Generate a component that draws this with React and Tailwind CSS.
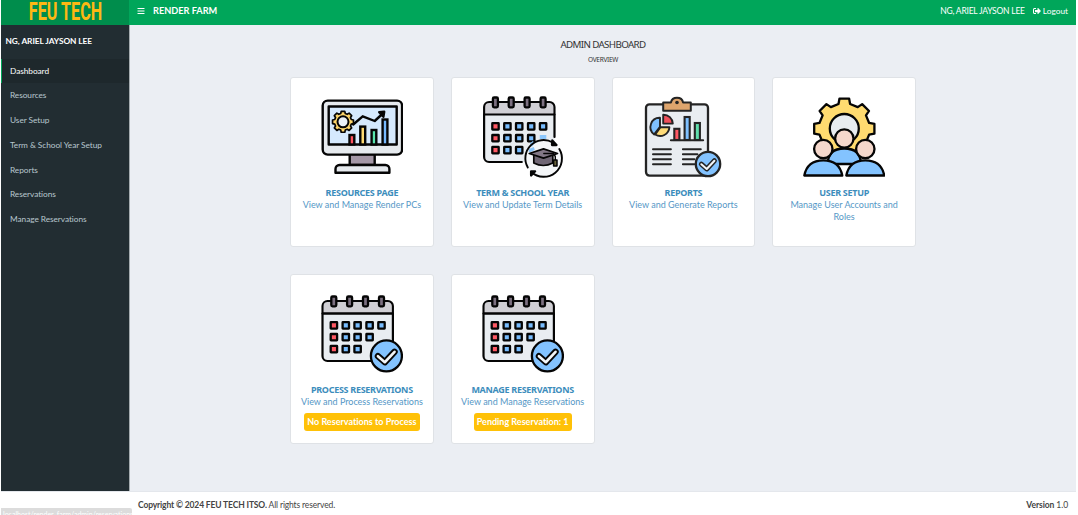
import React from "react";
import { FaBars, FaSignOutAlt } from "react-icons/fa";

const INK = "#050505";

function gearPath(cx, cy, outer, inner, teeth, tipHalf, rootHalf) {
  const points = [];
  for (let i = 0; i < teeth; i++) {
    const a = (i * 2 * Math.PI) / teeth - Math.PI / 2;
    [
      [inner, -rootHalf],
      [outer, -tipHalf],
      [outer, tipHalf],
      [inner, rootHalf],
    ].forEach(([r, d]) => {
      points.push(`${(cx + r * Math.cos(a + d)).toFixed(2)} ${(cy + r * Math.sin(a + d)).toFixed(2)}`);
    });
  }
  return `M${points.join("L")}Z`;
}

function MonitorIcon() {
  return (
    <svg className="size-[82px]" viewBox="11.3 11 82 82" fill="none" stroke={INK} strokeWidth="2.4" strokeLinejoin="round" strokeLinecap="round">
      <rect x="40" y="69" width="25" height="11" fill="#a497a6" />
      <path d="M25.8 87.8V84a4 4 0 0 1 4-4h45.9a4 4 0 0 1 4 4v3.8z" fill="#e6eaee" />
      <rect x="13" y="15.6" width="79.4" height="54" rx="5" fill="#e6eaee" />
      <rect x="19" y="21.5" width="68" height="38" fill="#d5e9fd" />
      <path d="M43.5 39.5 53 31.3l12 4.7 7.6-7" />
      <path d="m69.5 27.2 5-.5-.8 5z" fill={INK} />
      <path d={gearPath(33.3, 36.8, 10.6, 8.6, 8, 0.17, 0.27)} fill="#ffd76b" strokeWidth="1.7" />
      <circle cx="33.3" cy="36.8" r="5.5" fill="#eaf1f7" strokeWidth="2" />
      <g strokeLinejoin="miter">
        <rect x="39.8" y="50" width="4.8" height="9.5" fill="#ff5360" />
        <rect x="50.6" y="41.6" width="4.9" height="17.9" fill="#ffda71" />
        <rect x="61.9" y="45" width="4.7" height="14.5" fill="#58e5ad" />
        <rect x="72.9" y="34.5" width="4.8" height="25" fill="#77baff" />
      </g>
    </svg>
  );
}

const CELL_X = [25.7, 37.6, 49.4, 61.4, 73.3];
const CELL_Y = [41.4, 53.2, 65.1];

function CalendarBase({ counts, outline }) {
  return (
    <>
      <path d="M14.3 29.5V22a5 5 0 0 1 5-5h60.4a5 5 0 0 1 5 5v50a5 5 0 0 1-5 5H19.3a5 5 0 0 1-5-5z" fill="#e9edf1" stroke="none" />
      <path d="M14.3 29.5V22a5 5 0 0 1 5-5h60.4a5 5 0 0 1 5 5v7.5z" fill="#d0cfd4" strokeWidth="2.1" />
      <path d={outline} strokeWidth="2.2" />
      {[25.6, 41.4, 57.3, 73.3].map((x) => (
        <rect key={x} x={x - 2.5} y="12.5" width="5" height="9.8" rx="1.2" fill="#7c7080" />
      ))}
      {CELL_Y.map((y, row) =>
        CELL_X.slice(0, counts[row]).map((x, col) => (
          <rect key={`${x}-${y}`} x={x - 3.2} y={y - 3.2} width="6.4" height="6.4" rx=".3" fill={col === 0 ? "#ff5964" : "#78bdff"} strokeWidth="2.3" />
        ))
      )}
    </>
  );
}

function TermIcon() {
  return (
    <svg className="size-[82px]" viewBox="12.2 11 82 82" fill="none" stroke={INK} strokeWidth="2.3" strokeLinejoin="round" strokeLinecap="round">
      <CalendarBase counts={[5, 4, 3]} outline="M84.7 29.5V52M52 77H19.3a5 5 0 0 1-5-5V29.5" />
      <circle cx="73.7" cy="73.3" r="18" fill="#f4f6f8" stroke="none" />
      <path d="M60 58.500l3-2.500 2 2-3 4zM70 50h6.500v4H70zM59 64l5-2 1 3-4 2h-2z" fill="#8bc6fb" stroke="none" />
      <path d="M58 82.500A18.300 18.300 0 0 1 83 57.500M61.500 87A18.300 18.300 0 0 0 89.500 64" strokeWidth="1.900" />
      <path d="m82.500 55.500 4.200 4.500h-4.500zM61.300 90.500v-4.200h4z" fill={INK} />
      <path d="M64 70v8q9.500 5 19 0v-8z" fill="#6f6674" strokeWidth="1.700" />
      <path d="m59.500 68.500 14.200-4.700 14 4.700-14 4.600z" fill="#837887" strokeWidth="1.800" />
      <path d="M74 68.500h9.500l2 3v4" strokeWidth="1.400" />
      <rect x="83.800" y="75" width="3.400" height="6" fill="#68623b" strokeWidth="1.500" />
    </svg>
  );
}

function CheckBadge({ cx, cy, r, color }) {
  const k = r / 15.4;
  const d = `M${cx - 8.4 * k} ${cy + 0.3 * k}l${6.8 * k} ${6 * k} ${9.7 * k} ${-10.4 * k}`;
  return (
    <g stroke={color}>
      <circle cx={cx} cy={cy} r={r} fill="#83c3ff" strokeWidth="2.300" />
      <path d={d} strokeWidth={6.3 * k} />
      <path d={d} stroke="#f3f6f8" strokeWidth={2.6 * k} />
    </g>
  );
}

function ReservationIcon() {
  return (
    <svg className="size-[82px]" viewBox="11.3 8 82 82" fill="none" stroke={INK} strokeWidth="2.3" strokeLinejoin="round" strokeLinecap="round">
      <g transform="translate(-1.5 -1)">
        <CalendarBase counts={[5, 4, 3]} outline="M84.7 29.500V72a5 5 0 0 1-5 5H19.300a5 5 0 0 1-5-5V29.500z" />
      </g>
      <CheckBadge cx={76.7} cy={70.9} r={15.5} color={INK} />
    </svg>
  );
}

function ReportIcon() {
  const ink = "#242424";
  return (
    <svg className="size-[82px]" viewBox="12.3 11 82 82" fill="none" stroke={ink} strokeWidth="2.3" strokeLinejoin="round" strokeLinecap="round">
      <rect x="16.300" y="19.300" width="62" height="71.300" rx="3.500" fill="#e9edf1" />
      <path d="M33.500 25.800v-8.300h7.700q1-4.700 6.100-4.700t6.100 4.700h7.700v8.300z" fill="#dea56d" strokeWidth="2" />
      <circle cx="47.300" cy="17.500" r="1.800" fill={ink} stroke="none" />
      <g strokeWidth="1.900">
        <path d="M30.300 32.800a9.200 9.200 0 0 0-5.800 16.600l5.800-7.600z" fill="#7fc1ff" />
        <path d="m30.800 42.300-5.300 7.200a9.200 9.200 0 0 0 14.200-7.200z" fill="#ffdc79" />
        <path d="M33.500 29.700v8.900h9.600a9.300 9.300 0 0 0-9.600-8.900z" fill="#f1505b" />
      </g>
      <g strokeLinejoin="miter" strokeWidth="2.100">
        <rect x="44.600" y="43.800" width="5.100" height="11.200" fill="#ff5865" />
        <rect x="54.900" y="32" width="5.100" height="23" fill="#7fc1ff" />
        <rect x="65.100" y="38" width="5.100" height="17" fill="#60dfad" />
        <path d="M41.200 55.300h32.200" />
      </g>
      <path d="M23.300 64.200h17.900m-17.900 5h17.900m-17.900 5h17.900m-17.900 5h17.900M53.200 64.200h17.900m-17.900 5h14.500m-14.500 5h11.500m-11.500 5h11.500" strokeWidth="2" />
      <CheckBadge cx={78.3} cy={79} r={12.2} color={ink} />
    </svg>
  );
}

function Person({ x, y }) {
  return (
    <g>
      <path d={`M${x - 19} ${y + 26.500}q3-15.200 19-15.200t19 15.200z`} fill="#83c3ff" />
      <circle cx={x} cy={y} r="9.200" fill="#f5d8cc" />
    </g>
  );
}

function UsersIcon() {
  return (
    <svg className="size-[82px]" viewBox="12.7 11 82 82" fill="none" stroke={INK} strokeWidth="2.3" strokeLinejoin="round" strokeLinecap="round">
      <path d={gearPath(54, 43.8, 30.5, 25.500, 8, 0.16, 0.23)} fill="#ffdb70" />
      <circle cx="54" cy="43.500" r="14.500" fill="#e8ecf0" />
      <path d="M37.500 79q0-15.500 16.500-15.500T70.500 79z" fill="#83c3ff" />
      <circle cx="54" cy="53.500" r="9.200" fill="#f5d8cc" />
      <Person x={33} y={64} />
      <Person x={75} y={64} />
    </svg>
  );
}

const cards = [
  { title: "RESOURCES PAGE", text: "View and Manage Render PCs", Icon: MonitorIcon },
  { title: "TERM & SCHOOL YEAR", text: "View and Update Term Details", Icon: TermIcon },
  { title: "REPORTS", text: "View and Generate Reports", Icon: ReportIcon },
  { title: "USER SETUP", text: "Manage User Accounts and Roles", Icon: UsersIcon },
  { title: "PROCESS RESERVATIONS", text: "View and Process Reservations", Icon: ReservationIcon, badge: "No Reservations to Process" },
  { title: "MANAGE RESERVATIONS", text: "View and Manage Reservations", Icon: ReservationIcon, badge: "Pending Reservation: 1" },
];

const links = ["Dashboard", "Resources", "User Setup", "Term & School Year Setup", "Reports", "Reservations", "Manage Reservations"];

function Card({ title, text, Icon, badge }) {
  return (
    <a className="flex h-[170px] flex-col items-center rounded-[3px] border border-[#dfe2e6] bg-white pt-[18px] text-center text-[#5597c6]">
      <Icon />
      <h3 className="mt-[9px] whitespace-nowrap font-['Noto_Sans'] text-[9px] font-bold leading-[12px] tracking-[-0.290px] text-[#3c8dbc]">{title}</h3>
      <p className="w-[128px] text-[9px] leading-[12px]">{text}</p>
      {badge && (
        <span className="mt-[5px] h-[18px] whitespace-nowrap rounded-[3px] bg-[#ffc107] px-[3px] text-[9px] font-bold leading-[18px] text-white">{badge}</span>
      )}
    </a>
  );
}

export default function App() {
  return (
    <div className="relative flex h-[515px] w-[1078px] flex-col overflow-hidden bg-white pl-px pr-[2px] font-['Lato',sans-serif] text-[#333] [font-variant-ligatures:none]">
      <header className="flex h-[25px] shrink-0 bg-[#00a65a] text-white">
        <div className="flex w-[128px] shrink-0 justify-center bg-[#008d4c]">
          <span className="origin-center scale-x-[0.61] whitespace-nowrap pl-[3px] font-['Roboto'] text-[26.500px] font-bold leading-[21px] text-[#fdb813]">FEU TECH</span>
        </div>
        <div className="flex flex-1 items-center pb-[3px] pl-[8px] pr-[8px]">
          <FaBars className="size-[8px]" />
          <span className="ml-[8px] text-[9.200px] font-bold">RENDER FARM</span>
          <span className="ml-auto text-[8.500px] tracking-[-0.220px]">NG, ARIEL JAYSON LEE</span>
          <FaSignOutAlt className="ml-[8px] size-[8px]" />
          <span className="ml-[2px] text-[8.300px]">Logout</span>
        </div>
      </header>
      <div className="flex h-[466px] shrink-0">
        <aside className="w-[128px] shrink-0 bg-[#222d32] text-[#b8c7ce]">
          <div className="h-[33.500px] pl-[4.500px] text-[8.300px] font-bold leading-[33px] tracking-[-0.050px] text-white">NG, ARIEL JAYSON LEE</div>
          <nav>
            {links.map((label, i) => (
              <a
                key={label}
                className={
                  i === 0
                    ? "block h-[24.800px] border-l border-[#00a65a] bg-[#1e282c] pl-[8px] text-[8.300px] leading-[25px] tracking-[-0.060px] text-white"
                    : "block h-[24.800px] border-l border-transparent pl-[8px] text-[8.300px] leading-[25px] tracking-[-0.060px]"
                }
              >
                {label}
              </a>
            ))}
          </nav>
        </aside>
        <main className="flex flex-1 flex-col items-center border-l border-[#a5acb0] bg-[#ebeef3]">
          <h1 className="mt-[13px] font-['Noto_Sans'] text-[9.800px] leading-[14px] tracking-[-0.650px]">ADMIN DASHBOARD</h1>
          <h2 className="mt-[2px] font-['Noto_Sans'] text-[6.500px] leading-[12px] tracking-[-0.300px]">OVERVIEW</h2>
          <section className="mt-[11px] grid w-[626px] grid-cols-4 gap-x-[17px] gap-y-[27px]">
            {cards.map((card) => (
              <Card key={card.title} {...card} />
            ))}
          </section>
        </main>
      </div>
      <footer className="flex flex-1 items-center justify-between border-t border-[#e4e7ec] pl-[137px] pr-[8px] pt-[3px] text-[8.500px] tracking-[-0.140px] text-[#444]">
        <p><b>Copyright © 2024 FEU TECH ITSO.</b> All rights reserved.</p>
        <p className="tracking-[-0.080px]"><b>Version</b> 1.0</p>
      </footer>
      <div className="absolute left-px top-[508px] h-[14px] w-[131px] whitespace-nowrap rounded-tr-[2px] bg-[#dcdcdc] pl-[2px] text-[7px] leading-[13px] text-white">
        localhost/render_farm/admin/reservations
      </div>
    </div>
  );
}
